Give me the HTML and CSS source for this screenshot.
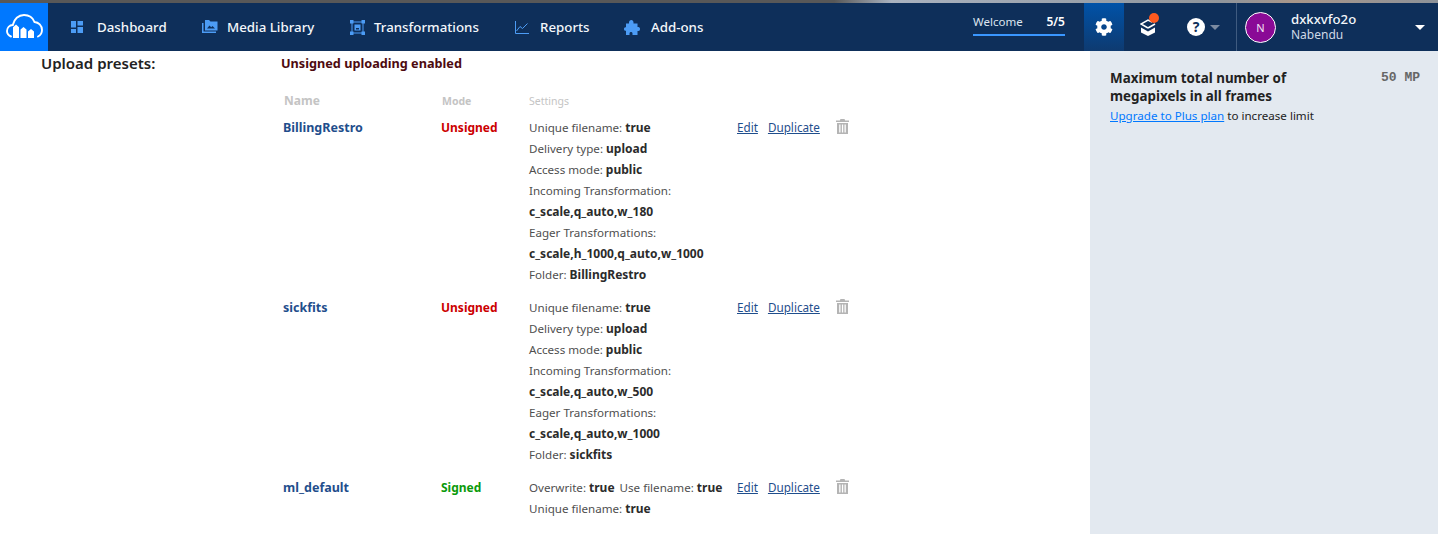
FILE: index.html
```html
<!DOCTYPE html>
<html lang="en">
<head>
<meta charset="utf-8">
<title>Upload presets</title>
<link rel="stylesheet" href="styles.css">
</head>
<body>
<div class="topstrip"></div>
<header class="topbar">
  <a class="logo" href="#" aria-label="Cloudinary">
    <svg width="37" height="24" viewBox="0 0 37 24" fill="none">
      <path d="M5 22.500C2.500 21.500 1 19.500 1 17c0-3.300 2.500-5.800 5.800-6C8 5 12.500 1 18 1c4.700 0 8.800 2.700 10.500 7 4 .3 7.500 3.500 7.500 8 0 3-1.500 5.300-4 6.500" stroke="#fff" stroke-width="1.900" stroke-linecap="round"/>
      <path d="M7 13.200L10 10.500l3 2.700V24H7zM14.500 15.500L17.500 13l3 2.500V24h-6zM22 17.500l3-2.500 3 2.500V24h-6z" fill="#fff"/>
    </svg>
  </a>
  <nav class="nav">
    <a class="nav-item nav-dash" href="#">
      <svg width="12" height="12" viewBox="0 0 12 12" fill="#4c9cf5"><path d="M0 0h5v6.500H0zM6.500 0H12v4.500H6.500zM0 8h5v4H0zM6.500 6h5.500v6H6.500z"/></svg>
      <span>Dashboard</span>
    </a>
    <a class="nav-item nav-media" href="#">
      <svg width="16" height="14" viewBox="0 0 16 14" fill="#4c9cf5"><path d="M3 0h4l1.500 1.500H15.500V10.500H3z"/><path d="M0 3h1.500v8.500H14V13H0z"/><path d="M5 8.500l2.500-3 1.700 1.800 1.300-1.300 2.500 2.500z" fill="#0e2f5a"/></svg>
      <span>Media Library</span>
    </a>
    <a class="nav-item nav-trans" href="#">
      <svg width="15" height="15" viewBox="0 0 15 15" fill="none" stroke="#4c9cf5"><rect x="2" y="2" width="11" height="11" stroke-width="1"/><rect x="4.500" y="4.500" width="6" height="6" fill="#4c9cf5" stroke="none"/><rect x="6" y="8" width="3" height="1.500" fill="#0e2f5a" stroke="none"/><g fill="#4c9cf5" stroke="none"><rect width="3.500" height="3.500"/><rect x="11.500" width="3.500" height="3.500"/><rect y="11.500" width="3.500" height="3.500"/><rect x="11.500" y="11.500" width="3.500" height="3.500"/></g></svg>
      <span>Transformations</span>
    </a>
    <a class="nav-item nav-rep" href="#">
      <svg width="14" height="13" viewBox="0 0 14 13" fill="none" stroke="#4c9cf5" stroke-width="1"><path d="M.5 0v12.500H14"/><path d="M1.500 10l3.500-4.500 2.500 2L12.500 2.500"/></svg>
      <span>Reports</span>
    </a>
    <a class="nav-item nav-add" href="#">
      <svg width="16" height="15" viewBox="0 0 16 15" fill="#4c9cf5"><path d="M5 2.500C5 1 6 0 7.300 0S9.500 1 9.500 2.500V3.500H13.500V7H14.500C15.500 7 16 8 16 9S15.500 11 14.500 11H13.500V15H8.500V13.500C8.500 12.500 7.800 12 7 12S5.500 12.500 5.500 13.500V15H2V10.800H1.500C.5 10.800 0 10 0 9S.5 7.200 1.500 7.200H2V3.500H5z"/></svg>
      <span>Add-ons</span>
    </a>
  </nav>
  <div class="welcome">
    <div class="welcome-row"><span>Welcome</span><b>5/5</b></div>
    <div class="welcome-bar"></div>
  </div>
  <a class="tab tab-active" href="#" aria-label="Settings">
    <svg width="18" height="18" viewBox="0 0 512 512" fill="#fff"><path d="M487.400 315.700l-42.600-24.600c4.300-23.200 4.300-47 0-70.200l42.600-24.600c4.900-2.800 7.100-8.600 5.500-14-11.100-35.600-30-67.800-54.700-94.600-3.800-4.100-10-5.100-14.800-2.300L380.800 110c-17.900-15.400-38.500-27.300-60.800-35.100V25.800c0-5.600-3.900-10.500-9.400-11.700-36.700-8.200-74.300-7.800-109.200 0-5.500 1.200-9.400 6.100-9.400 11.700V75c-22.200 7.900-42.800 19.800-60.800 35.100L88.700 85.500c-4.900-2.800-11-1.900-14.800 2.300-24.700 26.700-43.600 58.900-54.700 94.600-1.700 5.400.6 11.200 5.500 14L67.300 221c-4.300 23.200-4.300 47 0 70.200l-42.600 24.600c-4.900 2.800-7.100 8.600-5.500 14 11.100 35.600 30 67.800 54.700 94.600 3.800 4.100 10 5.100 14.800 2.300l42.600-24.600c17.900 15.400 38.500 27.300 60.800 35.100v49.200c0 5.600 3.900 10.500 9.400 11.700 36.700 8.200 74.300 7.800 109.200 0 5.500-1.200 9.400-6.100 9.400-11.700v-49.200c22.200-7.900 42.800-19.800 60.800-35.100l42.600 24.600c4.900 2.800 11 1.900 14.800-2.300 24.700-26.700 43.600-58.900 54.700-94.600 1.500-5.500-.7-11.300-5.600-14.100zM256 336c-44.100 0-80-35.900-80-80s35.900-80 80-80 80 35.900 80 80-35.900 80-80 80z"/></svg>
  </a>
  <a class="tab tab-box" href="#" aria-label="What's new">
    <svg width="16" height="18" viewBox="0 0 16 18" fill="none"><path d="M8 10L1 6l7-4 4 2.200" stroke="#fff" stroke-width="1.500"/><path d="M8 10l7-4" stroke="#fff" stroke-width="1.500"/><path d="M1 9.500l7 4 7-4v5L8 18l-7-3.500z" fill="#fff"/></svg>
    <span class="dot"></span>
  </a>
  <a class="tab tab-help" href="#" aria-label="Help">
    <span class="help-circle">?</span><span class="caret caret-dim"></span>
  </a>
  <div class="account">
    <span class="avatar">N</span>
    <div class="account-names"><div class="account-cloud">dxkxvfo2o</div><div class="account-user">Nabendu</div></div>
    <span class="caret"></span>
  </div>
</header>

<div class="page">
  <main class="content">
    <h2 class="section-label">Upload presets:</h2>
    <div class="section-body">
      <div class="status">Unsigned uploading enabled</div>
      <div class="preset preset-head">
        <div class="col-name">Name</div>
        <div class="col-mode">Mode</div>
        <div class="col-settings">Settings</div>
      </div>
      <div class="preset">
        <a class="col-name name-link" href="#">BillingRestro</a>
        <div class="col-mode unsigned">Unsigned</div>
        <div class="col-settings">
          <div>Unique filename: <b>true</b></div>
          <div>Delivery type: <b>upload</b></div>
          <div>Access mode: <b>public</b></div>
          <div>Incoming Transformation:</div>
          <div><b>c_scale,q_auto,w_180</b></div>
          <div>Eager Transformations:</div>
          <div><b>c_scale,h_1000,q_auto,w_1000</b></div>
          <div>Folder: <b>BillingRestro</b></div>
        </div>
        <div class="col-actions">
          <a href="#">Edit</a><a href="#">Duplicate</a>
          <svg class="trash" width="13" height="15" viewBox="0 0 13 15"><path d="M4.500 0h4l.7 1.500H13V3H0V1.500h3.800zM1 4h11v11H1zM3.200 5.500v8h1.300v-8zM5.900 5.500v8h1.300v-8zM8.500 5.500v8h1.300v-8z" fill="#b4b4b4" fill-rule="evenodd"/></svg>
        </div>
      </div>
      <div class="preset">
        <a class="col-name name-link" href="#">sickfits</a>
        <div class="col-mode unsigned">Unsigned</div>
        <div class="col-settings">
          <div>Unique filename: <b>true</b></div>
          <div>Delivery type: <b>upload</b></div>
          <div>Access mode: <b>public</b></div>
          <div>Incoming Transformation:</div>
          <div><b>c_scale,q_auto,w_500</b></div>
          <div>Eager Transformations:</div>
          <div><b>c_scale,q_auto,w_1000</b></div>
          <div>Folder: <b>sickfits</b></div>
        </div>
        <div class="col-actions">
          <a href="#">Edit</a><a href="#">Duplicate</a>
          <svg class="trash" width="13" height="15" viewBox="0 0 13 15"><path d="M4.500 0h4l.7 1.500H13V3H0V1.500h3.800zM1 4h11v11H1zM3.200 5.500v8h1.300v-8zM5.900 5.500v8h1.300v-8zM8.500 5.500v8h1.300v-8z" fill="#b4b4b4" fill-rule="evenodd"/></svg>
        </div>
      </div>
      <div class="preset">
        <a class="col-name name-link" href="#">ml_default</a>
        <div class="col-mode signed">Signed</div>
        <div class="col-settings">
          <div><span class="pair">Overwrite: <b>true</b></span><span>Use filename: <b>true</b></span></div>
          <div>Unique filename: <b>true</b></div>
        </div>
        <div class="col-actions">
          <a href="#">Edit</a><a href="#">Duplicate</a>
          <svg class="trash" width="13" height="15" viewBox="0 0 13 15"><path d="M4.500 0h4l.7 1.500H13V3H0V1.500h3.800zM1 4h11v11H1zM3.200 5.500v8h1.300v-8zM5.900 5.500v8h1.300v-8zM8.500 5.500v8h1.300v-8z" fill="#b4b4b4" fill-rule="evenodd"/></svg>
        </div>
      </div>
    </div>
  </main>
  <aside class="side">
    <div class="limit">
      <div class="limit-title">Maximum total number of megapixels in all frames</div>
      <div class="limit-value">50 MP</div>
    </div>
    <div class="limit-note"><a href="#">Upgrade to Plus plan</a> to increase limit</div>
  </aside>
</div>
</body>
</html>
```

FILE: styles.css
```css
* { box-sizing: border-box; }
html, body { margin: 0; height: 100%; overflow: hidden; }
body { font-family: "Noto Sans", "Open Sans", sans-serif; font-size: 12px; color: #4f4f4f; background: #fff; }
a { color: inherit; text-decoration: none; }

.topstrip { height: 3px; background: linear-gradient(90deg, #585858 0, #585858 58%, #a9b2bf 62%, #8f959c 85%, #a8968a 90%, #8d9299 100%); }

.topbar { display: flex; align-items: stretch; height: 48px; background: #0e2f5a; color: #fff; }
.logo { flex: none; width: 48px; background: #0078ff; display: flex; align-items: center; justify-content: center; padding-bottom: 2px; }

.nav { display: flex; flex: none; width: 925px; padding-left: 23px; font-size: 13.3px; font-weight: 500; color: #f4f7fb; }
.nav-item { display: flex; align-items: center; flex: none; }
.nav-item svg { flex: none; }
.nav-dash { width: 131px; gap: 14px; }
.nav-media { width: 148px; gap: 9px; }
.nav-trans { width: 165px; gap: 9px; }
.nav-rep { width: 109px; gap: 11px; }
.nav-add { gap: 11px; }

.welcome { flex: none; width: 92px; display: flex; flex-direction: column; font-size: 11.5px; color: #dde5ef; }
.welcome-row { display: flex; justify-content: space-between; height: 20px; line-height: 20px; margin-top: 9px; }
.welcome-row b { color: #fff; font-weight: 600; font-size: 12px; }
.welcome-bar { height: 2px; margin-top: 2px; background: #3a97ff; }

.tab { position: relative; display: flex; align-items: center; justify-content: center; flex: none; }
.tab-active { width: 40px; margin-left: 19px; background: linear-gradient(180deg, #0052a8 0, #0e3a70 100%); }
.tab-box { width: 48px; }
.tab-help { width: 64px; justify-content: flex-start; padding-left: 15px; gap: 5px; }
.dot { position: absolute; top: 10px; left: 25px; width: 10px; height: 10px; border-radius: 50%; background: #ff5a1f; }
.help-circle { width: 18px; height: 18px; border-radius: 50%; background: #fff; color: #0e2f5a; font: 700 14px/18px "Noto Sans", sans-serif; text-align: center; }
.caret { width: 0; height: 0; border-left: 5px solid transparent; border-right: 5px solid transparent; border-top: 5px solid #fff; flex: none; }
.caret-dim { border-top-color: #7c8ba1; }

.account { flex: 1; display: flex; align-items: center; padding: 0 13px 0 8px; border-left: 1px solid #3f5b80; }
.avatar { flex: none; width: 31px; height: 31px; border-radius: 50%; background: #8a0a96; border: 1px solid #fff; color: #f4e6f5; text-align: center; font-size: 11px; line-height: 29px; }
.account-names { flex: 1; margin-left: 15px; }
.account-cloud { font-size: 13.2px; line-height: 15px; font-weight: 500; color: #f4f7fb; }
.account-user { font-size: 12px; line-height: 15px; color: #cfd9e6; }

.page { display: flex; height: 483px; }
.content { flex: 1; display: flex; min-width: 0; padding-left: 41px; }
.section-label { flex: none; width: 242px; margin: 2px 0 0; font-size: 15px; line-height: 20px; font-weight: 600; color: #222; }
.section-body { flex: 1; min-width: 0; margin-left: -2px; }
.status { margin: 2px 0 0 0; height: 20px; line-height: 20px; font-size: 12.700px; font-weight: 700; color: #4d0a0f; }

.preset { display: grid; grid-template-columns: 158px 88px 208px 1fr; padding-left: 2px; margin-bottom: 12px; line-height: 21px; font-size: 11.6px; }
.preset-head { margin: 19px 0 7px; font-size: 12px; line-height: 18px; color: #c4c4c4; }
.preset-head .col-name { font-weight: 700; margin-left: 1px; }
.preset-head .col-mode { font-weight: 700; font-size: 10.500px; margin-left: 1px; }
.preset-head .col-settings { font-size: 10.500px; }

.name-link { color: #1f4e8c; font-weight: 700; font-size: 12.500px; }
.col-mode { font-weight: 700; font-size: 12px; }
.unsigned { color: #c00; }
.signed { color: #0a9a0a; }
.col-settings b { font-weight: 700; font-size: 12px; color: #2b2b2b; }
.pair { margin-right: 5px; }

.col-actions { display: flex; align-items: flex-start; color: #1f4e8c; font-size: 11.700px; }
.col-actions a { text-decoration: underline; margin-right: 10px; }
.trash { margin: 2px 0 0 6px; }

.side { flex: none; width: 348px; background: #e3e9f0; padding: 18px 18px 0 20px; color: #222; }
.limit { display: flex; justify-content: space-between; align-items: flex-start; }
.limit-title { width: 190px; font-size: 13.400px; line-height: 18px; font-weight: 700; color: #222; }
.limit-value { font: 700 13px/18px "Liberation Mono", monospace; color: #666; }
.limit-note { font-size: 11.600px; line-height: 20px; margin-top: 1px; }
.limit-note a { color: #0078ff; text-decoration: underline; }
```
